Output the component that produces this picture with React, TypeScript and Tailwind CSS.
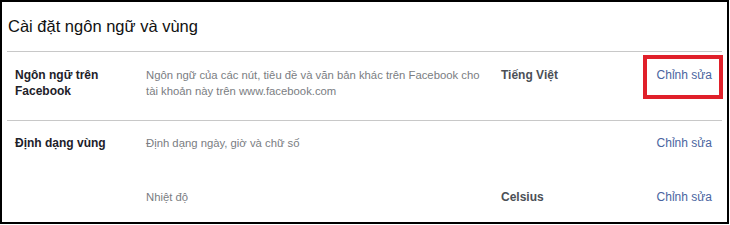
const font = { fontFamily: '"Liberation Sans", Arial, sans-serif' };

interface Row {
  label: string[];
  desc: string[];
  value?: string;
  highlight?: boolean;
  pad: string;
}

const rows: Row[] = [
  {
    label: ["Ngôn ngữ trên", "Facebook"],
    desc: ["Ngôn ngữ của các nút, tiêu đề và văn bản khác trên Facebook cho", "tài khoản này trên www.facebook.com"],
    value: "Tiếng Việt",
    highlight: true,
    pad: "pt-[15px] pb-[21px]",
  },
];

function SettingRow({ label, desc, value, highlight }: Omit<Row, "pad">) {
  return (
    <div className="relative flex text-[12px] leading-[16px]">
      <div className="w-[139px] shrink-0 pl-[8px] font-bold text-[#1d2129]">
        {label.map((l, i) => (
          <div key={i}>{l}</div>
        ))}
      </div>
      <div className="w-[355px] shrink-0 text-[11.3px] text-[#7a7d82]">
        {desc.map((d, i) => (
          <div key={i}>{d}</div>
        ))}
      </div>
      <div className="flex-1 font-bold text-[#4b4f56]">{value}</div>
      <a className="mr-[10px] text-[#4a64a0]">Chỉnh sửa</a>
      {highlight && (
        <div className="absolute right-[-1px] top-[-12px] h-[44px] w-[80px] border-4 border-[#e0202a]" />
      )}
    </div>
  );
}

export default function App() {
  return (
    <div className="h-[225px] w-[730px] bg-white" style={font}>
      <div className="h-[224px] w-[729px] border-2 border-black px-[5px]">
        <div className="pl-[1px] pt-[14px] pb-[15px] text-[16.5px] leading-[20px] text-[#111]">
          Cài đặt ngôn ngữ và vùng
        </div>
        <div className="h-px bg-[#c8c8c8]" />
        {rows.map((r, i) => (
          <div key={i} className={r.pad}>
            <SettingRow {...r} />
          </div>
        ))}
        <div className="h-px bg-[#c8c8c8]" />
        <div className="pt-[14px]">
          <SettingRow label={["Định dạng vùng"]} desc={["Định dạng ngày, giờ và chữ số"]} />
        </div>
        <div className="pt-[38px]">
          <SettingRow label={[""]} desc={["Nhiệt độ"]} value="Celsius" />
        </div>
      </div>
    </div>
  );
}
